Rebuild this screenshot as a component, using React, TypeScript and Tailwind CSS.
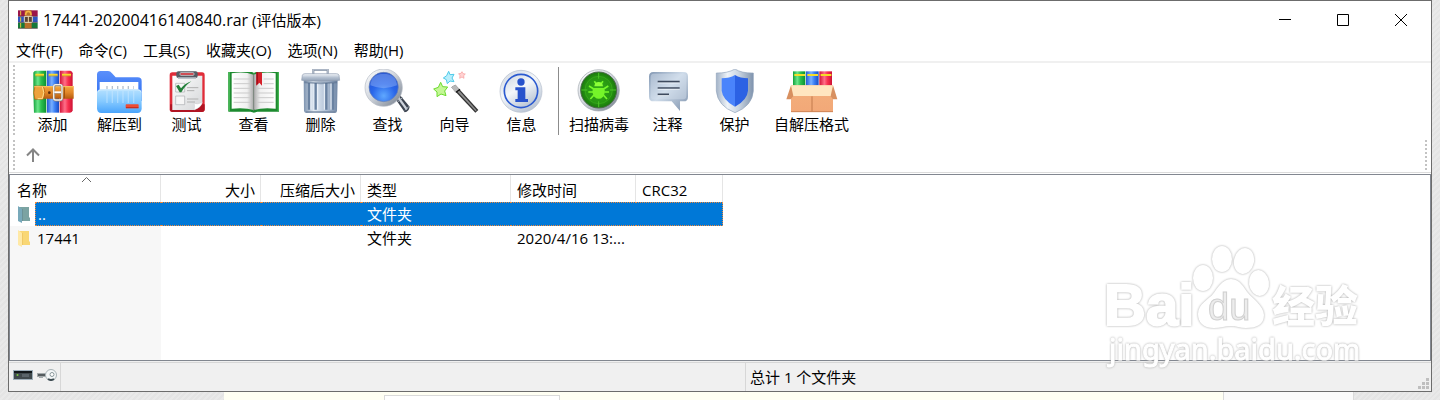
import { useState, type ReactNode } from 'react';

type Tool = { label: string; icon: ReactNode; width?: string };

const menus = ['文件(F)', '命令(C)', '工具(S)', '收藏夹(O)', '选项(N)', '帮助(H)'];

const entries = [
  { name: '..', type: '文件夹', modified: '', parent: true },
  { name: '17441', type: '文件夹', modified: '2020/4/16 13:...', parent: false },
];

function Icon({ box, children }: { box: string; children: ReactNode }) {
  return (
    <svg className="w-[52px] h-[46px] shrink-0" viewBox={box} aria-hidden="true">
      {children}
    </svg>
  );
}

// Shared gradients for the toolbar drawings
function Gradients() {
  return (
    <svg className="absolute w-0 h-0" aria-hidden="true">
      <defs>
        <linearGradient id="green"><stop offset="0" stopColor="#12a03a" /><stop offset=".35" stopColor="#6be58a" /><stop offset=".6" stopColor="#2cc050" /><stop offset="1" stopColor="#0b8f2f" /></linearGradient>
        <linearGradient id="blue"><stop offset="0" stopColor="#2459d4" /><stop offset=".4" stopColor="#78b0ff" /><stop offset=".65" stopColor="#3c80f5" /><stop offset="1" stopColor="#1a4cc2" /></linearGradient>
        <linearGradient id="red"><stop offset="0" stopColor="#d01236" /><stop offset=".4" stopColor="#ff6e88" /><stop offset=".65" stopColor="#f8304f" /><stop offset="1" stopColor="#cc1234" /></linearGradient>
        <linearGradient id="belt" x2="0" y2="1"><stop offset="0" stopColor="#f3a63c" /><stop offset=".5" stopColor="#e2882a" /><stop offset="1" stopColor="#b65c0e" /></linearGradient>
        <linearGradient id="folderBack" x2="0" y2="1"><stop offset="0" stopColor="#5b8ffb" /><stop offset="1" stopColor="#2a6cf0" /></linearGradient>
        <linearGradient id="folderFront" x2="0" y2="1"><stop offset="0" stopColor="#b4e0ff" /><stop offset=".5" stopColor="#86caff" /><stop offset="1" stopColor="#4aa4fb" /></linearGradient>
        <linearGradient id="paper" x2="1" y2="1"><stop offset="0" stopColor="#ffffff" /><stop offset="1" stopColor="#d4d6d8" /></linearGradient>
        <linearGradient id="steel" x2="0" y2="1"><stop offset="0" stopColor="#f3f6fa" /><stop offset=".5" stopColor="#b4c0d0" /><stop offset="1" stopColor="#8c9bb1" /></linearGradient>
        <linearGradient id="shieldRim" x2="1"><stop offset="0" stopColor="#a3b3c8" /><stop offset=".3" stopColor="#eef3f8" /><stop offset=".6" stopColor="#cbd6e2" /><stop offset="1" stopColor="#7f93ad" /></linearGradient>
        <linearGradient id="steelSide"><stop offset="0" stopColor="#7d93af" /><stop offset=".3" stopColor="#e4ecf5" /><stop offset=".65" stopColor="#b3c3d7" /><stop offset="1" stopColor="#7288a6" /></linearGradient>
        <linearGradient id="pageLeft"><stop offset="0" stopColor="#fff" /><stop offset=".7" stopColor="#f0f0f0" /><stop offset="1" stopColor="#a9a9a9" /></linearGradient>
        <linearGradient id="pageRight"><stop offset="0" stopColor="#a9a9a9" /><stop offset=".3" stopColor="#f0f0f0" /><stop offset="1" stopColor="#fff" /></linearGradient>
        <radialGradient id="lens" cx=".5" cy=".8" r=".8"><stop offset="0" stopColor="#5fa8ff" /><stop offset=".5" stopColor="#2a67ea" /><stop offset="1" stopColor="#1f4fd0" /></radialGradient>
        <linearGradient id="ring" x2="1" y2="1"><stop offset="0" stopColor="#ffffff" /><stop offset=".45" stopColor="#d3d8df" /><stop offset="1" stopColor="#707a88" /></linearGradient>
        <linearGradient id="disc" x2=".6" y2="1"><stop offset="0" stopColor="#cdd5e0" /><stop offset=".5" stopColor="#f4f7fa" /><stop offset="1" stopColor="#bcc7d6" /></linearGradient>
        <radialGradient id="radar"><stop offset="0" stopColor="#34ad1a" /><stop offset=".7" stopColor="#279612" /><stop offset="1" stopColor="#1a780d" /></radialGradient>
        <linearGradient id="bubble" x2="1" y2="1"><stop offset="0" stopColor="#8398b3" /><stop offset=".45" stopColor="#cfdcea" /><stop offset="1" stopColor="#7e92ac" /></linearGradient>
        <linearGradient id="carton" x2="0" y2="1"><stop offset="0" stopColor="#f3b07c" /><stop offset="1" stopColor="#f2a878" /></linearGradient>
      </defs>
    </svg>
  );
}

const AddIcon = () => (
  <Icon box="82 27 156 138">
    <path d="M101 38q2-6 8-6h31v126h-37q-3-60-2-120z" fill="url(#green)" />
    <path d="M142 32h36v126h-36z" fill="url(#blue)" />
    <path d="M180 32h32q7 2 7 8v111q-1 7-8 7h-31z" fill="url(#red)" />
    <path d="M107 44h26M147 44h27M187 44h27" stroke="#f7d92c" strokeWidth="6" />
    <path d="M107 48h26M147 48h27M187 48h27" stroke="#c79a1c" strokeWidth="2" />
    <path d="M104 78h118v38H104q-5-19 0-38z" fill="url(#belt)" />
    <path d="M106 78h24q10 19 0 40h-24q-7-20 0-40z" fill="#eda23c" stroke="#a95c10" strokeWidth="2" />
    <path d="M128 80q9 18 0 36h-14" fill="none" stroke="#ffdf8a" strokeWidth="3" />
    <path d="M194 79v36" stroke="#9c4c0a" strokeWidth="3" />
    <path d="M104 80h118" stroke="#fbc468" strokeWidth="3" />
    <circle cx="149" cy="98" r="4" fill="#5b2a08" />
    <rect x="163" y="75" width="24" height="46" rx="6" fill="none" stroke="#8b8178" strokeWidth="7" />
    <rect x="162" y="74" width="25" height="46" rx="6" fill="none" stroke="#f4efe8" strokeWidth="4" />
    <path d="M164 97h20" stroke="#fff" strokeWidth="6" />
    <path d="M164 101h20" stroke="#8b8178" strokeWidth="2" />
  </Icon>
);

const ExtractIcon = () => (
  <Icon box="283 27 156 138">
    <path d="M292 44q0-11 11-11h22q7 0 12 7l11 12h66q12 0 12 11v60H292z" fill="url(#folderBack)" />
    <path d="M300 66h116v38H300z" fill="#fff" />
    <path d="M320 83h82" stroke="#b6c1cd" strokeWidth="10" strokeDasharray="4 12" />
    <path d="M292 99q0-11 12-11h110q12 0 12 11v46q0 14-13 14H305q-13 0-13-14z" fill="url(#folderFront)" />
    <path d="M294 97q2-7 10-7h110q8 0 10 7" fill="none" stroke="#dff3ff" strokeWidth="2" />
    <path d="M322 93v36M338 93v36M354 93v36M370 93v36M386 93v36M402 93v36" stroke="#c8e8ff" strokeWidth="4" opacity=".55" />
    <rect x="378" y="133" width="39" height="12" rx="2" fill="#ee4c34" />
    <path d="M379 143h37" stroke="#bd2a1e" strokeWidth="3" />
  </Icon>
);

const TestIcon = () => (
  <Icon box="484 27 156 138">
    <rect x="510" y="37" width="105" height="119" rx="8" fill="#e02c38" />
    <path d="M511 147q0 9 8 9h87q9 0 9-9v-14H511z" fill="#b01422" />
    <path d="M518 47h90v82q-5 15-25 21h-65z" fill="url(#paper)" />
    <path d="M583 150q4-14 0-20 10 5 25-3-4 16-25 23z" fill="#fff" stroke="#c1c3c5" />
    <rect x="530" y="34" width="64" height="20" rx="6" fill="#565b63" />
    <rect x="541" y="38" width="42" height="8" rx="3" fill="#d3383f" stroke="#b9bec5" strokeWidth="3" />
    <path d="M535 54h54" stroke="#b4bac2" strokeWidth="5" />
    <path d="M528 70h27v26h-27zM528 108h27v26h-27z" fill="#f6f6f6" stroke="#a9abad" strokeWidth="2" />
    <path d="M562 83h34M562 92h22M562 117h34M562 126h24" stroke="#b0b0b0" strokeWidth="3" />
    <path d="m529 78 8-4 7 11q12-15 31-21-20 14-30 33h-5z" fill="#22803a" />
  </Icon>
);

const ViewIcon = () => (
  <Icon box="55 27 156 138">
    <path d="M56 36h70q7 0 7 5 0-5 7-5h68v119h-65l-10 3-10-3H56z" fill="#1d8a2f" />
    <path d="M56 36h5v117h-5zM204 36h4v117h-4z" fill="#43b552" />
    <path d="M66 40q38-6 66 4v106q-26-8-66-4z" fill="url(#pageLeft)" />
    <path d="M132 44q32-10 66-4v106q-40-4-66 4z" fill="url(#pageRight)" />
    <path d="M72 57h50M72 71h50M72 85h50M72 99h50M72 113h50M72 127h50M143 85h49M143 99h49M143 113h49M143 127h49M162 57h30M162 71h30" stroke="#cbcbcb" strokeWidth="3" />
    <path d="M132 43v110" stroke="#777" strokeWidth="2" />
    <path d="M140 37h17v40l-8-9-9 9z" fill="#d5212a" />
    <path d="M140 37h5v33l-5 6z" fill="#a50f1a" />
  </Icon>
);

const DeleteIcon = () => (
  <Icon box="256 27 156 138">
    <path d="M311 42V29h43v13" fill="none" stroke="#7e8ca0" strokeWidth="6" />
    <path d="M311 41V28h43v13" fill="none" stroke="#d0d8e2" strokeWidth="2" />
    <path d="M282 59h102l-2 94q0 6-8 6h-83q-7 0-8-6z" fill="url(#steelSide)" />
    <path d="M298 69v80M318 69v80M350 69v80M370 69v80" stroke="#6a82a1" strokeWidth="7" />
    <path d="M304 69v80M324 69v80M344 69v80M364 69v80" stroke="#eef4fb" strokeWidth="3" />
    <path d="M276 61l2-15q1-5 8-5h94q7 0 8 5l2 15q-57 6-114 0z" fill="url(#steel)" stroke="#8f9db1" strokeWidth="2" />
    <path d="M284 64q50 6 98 0v6q-48 5-98 0z" fill="#566b88" opacity=".55" />
    <path d="M288 156h90" stroke="#71859f" strokeWidth="4" />
  </Icon>
);

const FindIcon = () => (
  <Icon box="457 27 156 138">
    <path d="m557 116 13-12 30 36q-2 14-15 17z" fill="#3c4450" />
    <path d="m562 113 5-5 27 38-5 5z" fill="#cdd3db" />
    <path d="m565 125 14-13M586 151l12-12" stroke="#aeb7c2" strokeWidth="3" />
    <circle cx="522" cy="83" r="56" fill="url(#ring)" stroke="#b4bac4" strokeWidth="2" />
    <circle cx="522" cy="81" r="44" fill="url(#lens)" stroke="#6d83b4" strokeWidth="2" />
    <path d="M482 76q3-35 40-35t40 35q-40 17-80 0z" fill="#b8d2ff" opacity=".35" />
  </Icon>
);

const WizardIcon = () => (
  <Icon box="28 27 156 138">
    <path d="m63 67 6 13 15 1-9 12 4 14-15-5-12 8v-14l-10-9 14-5z" fill="#c4f795" stroke="#6cdb2f" strokeWidth="3" />
    <path d="m87 34 4 10 12-1-6 11 6 11-12-2-8 8-3-12-9-5 10-7z" fill="#b9eefb" stroke="#4ccaea" strokeWidth="3" />
    <path d="m127 35 3 6 7 1-5 5 1 8-6-4-7 4 1-8-4-6 7-1z" fill="#ffd3d3" stroke="#f79a9a" strokeWidth="2" />
    <path d="m95 82 12-8 69 76-9 8z" fill="#333" />
    <path d="m99 80 5-4 67 75-3 3z" fill="#8d8d8d" />
    <path d="m95 82 12-8 13 14-13 10z" fill="#b8b8b8" />
    <path d="m109 97 12-9" stroke="#111" strokeWidth="4" />
  </Icon>
);

const InfoIcon = () => (
  <Icon box="229 27 156 138">
    <circle cx="304" cy="94" r="63" fill="url(#disc)" stroke="#b3bdcb" strokeWidth="2" />
    <circle cx="304" cy="93" r="50" fill="url(#disc)" stroke="#2b5ad0" strokeWidth="5" />
    <circle cx="304" cy="66" r="11" fill="#2853cc" />
    <path d="M287 82h30v35h8v9h-38v-9h7V91h-7z" fill="#2853cc" />
  </Icon>
);

const ScanIcon = () => (
  <Icon box="459 27 156 138">
    <circle cx="536" cy="91" r="62" fill="url(#ring)" stroke="#a0a6ae" strokeWidth="2" />
    <circle cx="536" cy="90" r="54" fill="url(#radar)" stroke="#4d6b4c" strokeWidth="3" />
    <circle cx="536" cy="90" r="41" fill="none" stroke="#3cb01e" strokeWidth="2" />
    <path d="M536 38v18M536 124v18M484 90h18M570 90h18" stroke="#4cc428" strokeWidth="3" />
    <path d="m520 86-13-8M519 96h-14M522 105l-11 12M552 86l13-8M553 96h14M550 105l11 12M529 72l-6-8M543 72l6-8" stroke="#77fa2b" strokeWidth="5" fill="none" />
    <path d="M519 84h34q4 16-4 26-12 13-26 0-8-10-4-26z" fill="#75f529" />
    <path d="M523 79q1-13 13-13t13 13z" fill="#8cff38" />
  </Icon>
);

const CommentIcon = () => (
  <Icon box="6 27 156 138">
    <path d="M40 36h91q13 0 13 13v61q0 14-13 14h-11v29l-25-29H41q-14 0-14-14V50q0-14 13-14z" fill="url(#bubble)" />
    <path d="M41 41h89q9 0 9 9v58q0 10-9 10H42q-10 0-10-10V51q0-10 9-10z" fill="#d5e1ee" opacity=".45" />
    <path d="M53 65h66M53 84h66M53 103h34" stroke="#3e4a5e" strokeWidth="5" />
    <path d="M53 69h66M53 88h66M53 107h34" stroke="#f4f8fc" strokeWidth="2" />
  </Icon>
);

const ProtectIcon = () => (
  <Icon box="207 27 156 138">
    <path d="M285 27q20 13 55 12v54q-3 45-55 65-52-20-56-65V39q34 1 56-12z" fill="url(#shieldRim)" stroke="#93a5bb" strokeWidth="2" />
    <path d="M285 45q16 10 39 10v37q-2 28-39 48z" fill="#2c62e4" />
    <path d="M285 45q-16 10-40 10v37q3 28 40 48z" fill="#4a84fb" />
  </Icon>
);

const SfxIcon = () => (
  <Icon box="438 27 156 138">
    <path d="M459 34h37v48h-37z" fill="url(#green)" />
    <path d="M498 34h38v48h-38z" fill="url(#blue)" />
    <path d="M538 34h38v48h-38z" fill="url(#red)" />
    <path d="M463 45h32M502 45h32M542 45h32" stroke="#f5dd27" strokeWidth="6" />
    <path d="M453 76h126v80H453z" fill="url(#carton)" />
    <path d="M453 76l-14 42h13l10-12zM579 76l13 42h-13l-9-12z" fill="#d89060" />
    <path d="M453 76h126l-7 32H460z" fill="#ffe6c0" />
    <path d="M516 109v47" stroke="#c27b4c" strokeWidth="3" />
    <path d="M453 155h126" stroke="#cf8557" strokeWidth="3" />
  </Icon>
);

const mainTools: Tool[] = [
  { label: '添加', icon: <AddIcon /> },
  { label: '解压到', icon: <ExtractIcon /> },
  { label: '测试', icon: <TestIcon /> },
  { label: '查看', icon: <ViewIcon /> },
  { label: '删除', icon: <DeleteIcon /> },
  { label: '查找', icon: <FindIcon /> },
  { label: '向导', icon: <WizardIcon /> },
  { label: '信息', icon: <InfoIcon /> },
];

const extraTools: Tool[] = [
  { label: '扫描病毒', icon: <ScanIcon />, width: 'w-[70px]' },
  { label: '注释', icon: <CommentIcon /> },
  { label: '保护', icon: <ProtectIcon /> },
  { label: '自解压格式', icon: <SfxIcon />, width: 'w-[87px]' },
];

function ToolButton({ tool }: { tool: Tool }) {
  return (
    <button type="button" className={`${tool.width ?? 'w-[67px]'} shrink-0 flex flex-col items-center pt-[6px] whitespace-nowrap`}>
      {tool.icon}
      <span className="leading-[18px]">{tool.label}</span>
    </button>
  );
}

// Dotted handle at the edge of each toolbar row
function Grip() {
  return <div className="w-[2px] shrink-0 my-[2px] bg-[repeating-linear-gradient(to_bottom,#c3c3c3_0_2px,transparent_2px_4px)]" />;
}

function ArchiveLogo() {
  return (
    <svg className="w-5 h-[19px]" viewBox="54 29 60 57" aria-hidden="true">
      <path d="M54 30h59v18H54z" fill="#9b1649" />
      <path d="M54 49h59v17H54z" fill="#2f55c0" />
      <path d="M54 67h59v17H54z" fill="#15793a" />
      <path d="M54 48h59M54 66h59M54 84h59" stroke="#5a3b46" strokeWidth="2" />
      <path d="M62 32v13M62 51v13M62 68v14" stroke="#e5c53d" strokeWidth="3" />
      <path d="M74 30h21v54H74z" fill="#b8702a" />
      <path d="M77 44q0-11 8-11t8 11" fill="none" stroke="#f5b541" strokeWidth="5" />
      <rect x="73" y="48" width="24" height="18" rx="2" fill="#5b4333" stroke="#e5dccb" strokeWidth="3" />
      <path d="M85 48v19" stroke="#f7dca3" strokeWidth="3" />
    </svg>
  );
}

function FolderGlyph({ parent }: { parent: boolean }) {
  return (
    <svg className="w-3 h-[17px]" viewBox="0 0 12 17" aria-hidden="true">
      <path d="M1 1h10v10l1 1v3H1z" fill={parent ? '#7ba3a2' : '#f9d775'} />
      <path d="M0 0l4 3v14l-4-2z" fill={parent ? '#78a9ba' : '#ffe9a6'} />
      <path d="M4.500 3v12" stroke={parent ? '#6c9296' : '#f0c966'} />
    </svg>
  );
}

function Watermark() {
  return (
    <svg className="absolute right-[61px] bottom-[19px] w-[270px] h-[132px] pointer-events-none drop-shadow-[0_0_1px_#a8a8a8]" viewBox="1100 240 270 132">
      <g fill="#fff">
        <text x="1104" y="325" fontSize="58" fontWeight="700" stroke="#fff" strokeWidth="2" fontFamily="Liberation Sans, sans-serif">Bai</text>
        <text x="1272" y="322" fontSize="43" fontWeight="900" fontFamily="Noto Sans CJK SC, sans-serif">经验</text>
        <text x="1109" y="360" fontSize="29" stroke="#fff" fontFamily="Noto Sans, sans-serif">jingyan.baidu.com</text>
        <ellipse cx="1203" cy="278" rx="10" ry="13" />
        <ellipse cx="1222" cy="259" rx="10" ry="13" />
        <ellipse cx="1244" cy="261" rx="10" ry="13" transform="rotate(12 1244 261)" />
        <ellipse cx="1259" cy="283" rx="10" ry="13" transform="rotate(-8 1259 283)" />
        <path d="M1231 279c9 0 13 9 17 14s16 13 16 22c0 10-8 13-18 13-6 0-10-2-15-2s-11 2-17 2c-11 0-16-6-16-14 0-10 11-15 15-20s9-15 18-15z" />
      </g>
      <text x="1208" y="320" fontSize="38" fontFamily="Liberation Sans, sans-serif" stroke="#cfcfcf" strokeWidth="1" fill="#ececec">du</text>
    </svg>
  );
}

export default function App() {
  const [selected, setSelected] = useState('..');

  return (
    <div className="h-screen flex flex-col overflow-hidden text-[15px] text-black bg-[repeating-linear-gradient(135deg,#e4e4e4_0_2px,#e9e9e9_2px_4px)] font-['Open_Sans','Noto_Sans_CJK_SC',sans-serif]">
      <Gradients />
      <main className="relative flex-1 min-h-0 mx-2 flex flex-col bg-white border border-[#6c6c6c]">
        {/* Title bar */}
        <header className="h-[37px] shrink-0 flex items-center pr-px">
          <div className="flex-1 flex items-center gap-[5px] pl-[9px]">
            <ArchiveLogo />
            <h1><span className="text-base">17441-20200416140840.rar</span> (评估版本)</h1>
          </div>
          <button type="button" aria-label="最小化" className="w-[58px] h-full flex items-center justify-center">
            <svg className="w-3 h-3" viewBox="0 0 12 12"><path d="M0 5.500h12" stroke="#000" /></svg>
          </button>
          <button type="button" aria-label="最大化" className="w-[58px] h-full flex items-center justify-center">
            <svg className="w-3 h-3" viewBox="0 0 12 12"><path d="M.5.5h11v11H.5z" fill="none" stroke="#000" /></svg>
          </button>
          <button type="button" aria-label="关闭" className="w-[58px] h-full flex items-center justify-center">
            <svg className="w-3 h-3" viewBox="0 0 12 12"><path d="m0 0 12 12M12 0 0 12" stroke="#000" /></svg>
          </button>
        </header>

        {/* Menu */}
        <nav className="h-[25px] shrink-0 flex items-center gap-4 pl-[7px] border-b-2 border-[#f0f0f0]">
          {menus.map((m) => (
            <button key={m} type="button" className="leading-5">{m}</button>
          ))}
        </nav>

        {/* Toolbar */}
        <div className="h-[75px] shrink-0 flex pl-1">
          <Grip />
          <div className="flex pl-1">
            {mainTools.map((tool) => <ToolButton key={tool.label} tool={tool} />)}
          </div>
          <div className="w-px shrink-0 mt-1 mb-[3px] ml-[3px] mr-[5px] bg-[#8c8c8c]" />
          {extraTools.map((tool) => <ToolButton key={tool.label} tool={tool} />)}
        </div>
        <div className="h-[35px] shrink-0 flex pl-1 pr-1 border-b border-[#dcdcdc]">
          <Grip />
          <button type="button" aria-label="向上" className="px-[11px] flex items-center">
            <svg className="w-[14px] h-[14px]" viewBox="0 0 14 14" fill="none" stroke="#858585" strokeWidth="2">
              <path d="M7 14V2M1 7.500l6-6 6 6" />
            </svg>
          </button>
          <div className="flex-1" />
          <Grip />
        </div>

        {/* File list */}
        <section className="flex-1 min-h-0 mt-px overflow-hidden border border-[#828790] bg-[linear-gradient(to_right,#f7f7f7_151px,#fff_151px)]">
          <div className="bg-white">
            <table className="w-[713px] table-fixed border-separate border-spacing-0 text-left whitespace-nowrap leading-5">
              <colgroup>
                <col className="w-[151px]" />
                <col className="w-[100px]" />
                <col className="w-[100px]" />
                <col className="w-[150px]" />
                <col className="w-[125px]" />
                <col className="w-[87px]" />
              </colgroup>
              <thead>
                <tr className="h-[27px] *:px-0 *:pt-[2px] *:pb-0 *:font-normal *:border-r *:border-[#e5e5e5]">
                  <th className="relative">
                    <span className="pl-[7px]">名称</span>
                    <svg className="absolute left-[72px] top-[2px] w-[9px] h-[5px]" viewBox="0 0 9 5" fill="none" stroke="#666">
                      <path d="m0 5 4.500-4.500L9 5" />
                    </svg>
                  </th>
                  <th className="text-right"><span className="pr-[5px]">大小</span></th>
                  <th className="text-right"><span className="pr-[5px]">压缩后大小</span></th>
                  <th><span className="pl-[6px]">类型</span></th>
                  <th><span className="pl-[6px]">修改时间</span></th>
                  <th><span className="pl-[6px]">CRC32</span></th>
                </tr>
              </thead>
              <tbody>
                {entries.map((e) => {
                  const active = e.name === selected;
                  const cell = active ? 'bg-[#0078d7] text-white border-y border-dotted border-[#f08a3c]' : '';
                  return (
                    <tr key={e.name} className="h-6 *:p-0" onClick={() => setSelected(e.name)}>
                      <td className={active ? '' : 'bg-[#f7f7f7]'}>
                        <div className="flex h-6">
                          <span className="w-[25px] pl-2 flex items-center"><FolderGlyph parent={e.parent} /></span>
                          <span className={`flex-1 pl-[2px] flex items-center ${cell} ${active ? 'border-l' : ''}`}>{e.name}</span>
                        </div>
                      </td>
                      <td className={cell} />
                      <td className={cell} />
                      <td className={cell}><span className="pl-[6px]">{e.type}</span></td>
                      <td className={cell}><span className="pl-[6px]">{e.modified}</span></td>
                      <td className={`${cell} ${active ? 'border-r' : ''}`} />
                    </tr>
                  );
                })}
              </tbody>
            </table>
          </div>
        </section>

        {/* Status bar */}
        <footer className="h-[30px] shrink-0 pt-px bg-[#f0f0f0]">
          <div className="h-full flex items-stretch border-t border-[#d7d7d7]">
            <div className="w-[52px] flex items-center gap-1 pl-1 pb-1 border-r border-[#d7d7d7]">
              <svg className="w-5 h-[10px]" viewBox="0 0 20 10" aria-hidden="true">
                <path d="M0 0h20v10H0z" fill="#9fb0bb" />
                <path d="M1 1h18v8H1z" fill="#3f494d" />
                <path d="M1 2h18" stroke="#11181b" strokeWidth="2" />
                <path d="M9 5.500h7" stroke="#59646a" strokeWidth="3" />
                <circle cx="4.500" cy="5" r="1" fill="#7ac943" />
              </svg>
              <svg className="w-5 h-3" viewBox="0 0 20 12" aria-hidden="true">
                <path d="M0 4h11v4H6v1H2V8H0z" fill="#a3aaac" />
                <path d="M1 6h9" stroke="#555c5f" strokeWidth="2" />
                <circle cx="14" cy="6" r="5.500" fill="#f3f6f7" stroke="#a7b2b6" />
                <path d="M11 10q3 2 6 0" stroke="#3c4a50" fill="none" strokeWidth="2" />
                <circle cx="15" cy="5.500" r="2" fill="#fff" stroke="#8a979b" />
              </svg>
            </div>
            <div className="flex-1" />
            <div className="w-[686px] flex items-center justify-between pl-1 border-l border-[#d7d7d7]">
              <span className="leading-5">总计 1 个文件夹</span>
              <svg className="w-[11px] h-[11px] self-end mb-[2px] mr-[2px]" viewBox="0 0 11 11" fill="#bfbfbf" aria-hidden="true">
                <path d="M8 0h3v3H8zM4 4h3v3H4zM8 4h3v3H8zM0 8h3v3H0zM4 8h3v3H4zM8 8h3v3H8z" />
              </svg>
            </div>
          </div>
        </footer>
        <Watermark />
      </main>

      {/* Page showing below the window */}
      <div className="h-2 shrink-0 flex pl-[224px] pr-[86px]">
        <div className="flex-1 flex items-end pl-[160px] bg-[#fffff3]">
          <div className="w-[176px] h-[5px] border border-b-0 border-[#dadada] bg-white" />
        </div>
        <div className="w-[131px] border-x border-[#dadada] bg-[#fafafa]" />
      </div>
    </div>
  );
}
